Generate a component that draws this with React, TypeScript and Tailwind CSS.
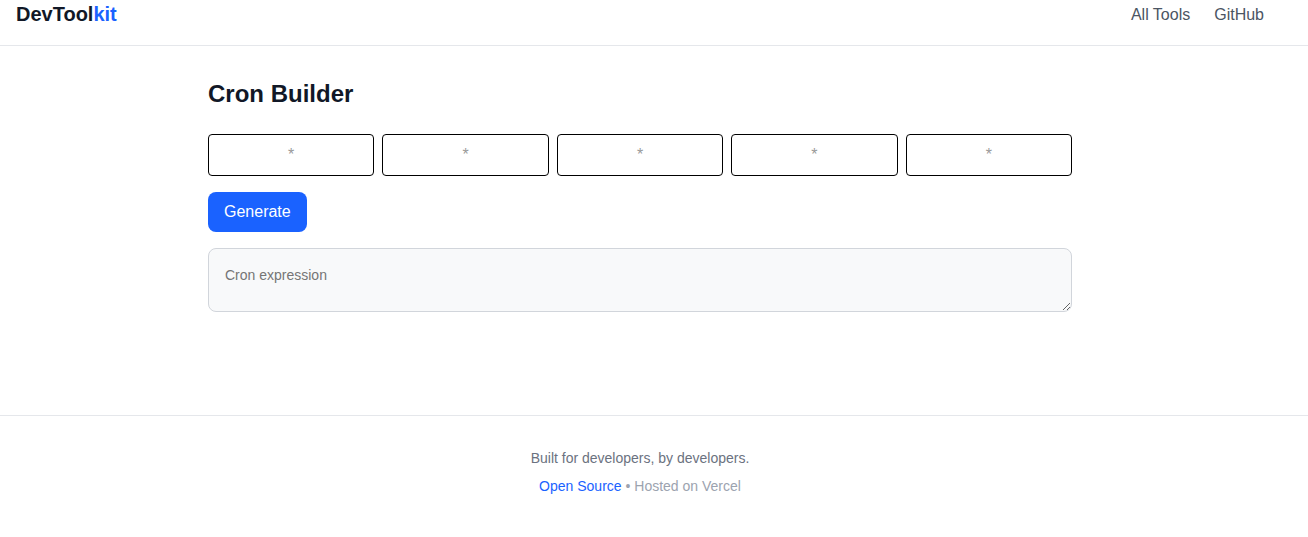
import type { FC } from "react";

const fields = ["minute", "hour", "day", "month", "weekday"];

const App: FC = () => {
  return (
    <div className="min-h-screen bg-white font-['Liberation_Sans',Arial,sans-serif] text-gray-900">
      {/* Header */}
      <header className="border-b border-[#e5e7eb]">
        <div className="max-w-7xl px-4 pb-[17px]">
          <div className="flex h-7 items-center justify-between">
            <a href="#" className="text-xl font-bold text-[#111827]">
              DevTool<span className="text-[#1a62ff]">kit</span>
            </a>
            <nav className="mt-[2px] flex gap-6 text-base text-[#4b5563]">
              <a href="#">All Tools</a>
              <a href="#">GitHub</a>
            </nav>
          </div>
        </div>
      </header>

      {/* Main */}
      <main className="max-w-7xl pt-8 pb-[103px]">
        <div className="mx-auto max-w-4xl px-4">
          <h1 className="mb-6 text-2xl font-bold text-[#111827]">Cron Builder</h1>

          <div className="grid grid-cols-5 gap-2">
            {fields.map((f) => (
              <input
                key={f}
                aria-label={f}
                placeholder="*"
                className="h-[42px] rounded border border-black px-2 text-center text-base placeholder:text-[#9a9a9a] focus:outline-none"
              />
            ))}
          </div>

          <button className="mt-4 h-10 rounded-lg bg-[#1a62ff] px-4 text-base text-white">
            Generate
          </button>

          <textarea
            readOnly
            placeholder="Cron expression"
            className="mt-4 block h-16 w-full rounded-lg border border-[#d1d5db] bg-[#f8f9fa] p-4 text-sm leading-5 placeholder:text-[#757575] focus:outline-none"
          />
        </div>
      </main>

      {/* Footer */}
      <footer className="border-t border-[#e5e7eb]">
        <div className="max-w-7xl py-8 text-center text-sm leading-5">
          <p className="text-[#6b7280]">Built for developers, by developers.</p>
          <p className="mt-2 text-[#9ca3af]">
            <a href="#" className="text-[#1a62ff]">
              Open Source
            </a>{" "}
            • Hosted on Vercel
          </p>
        </div>
      </footer>
    </div>
  );
};

export default App;
